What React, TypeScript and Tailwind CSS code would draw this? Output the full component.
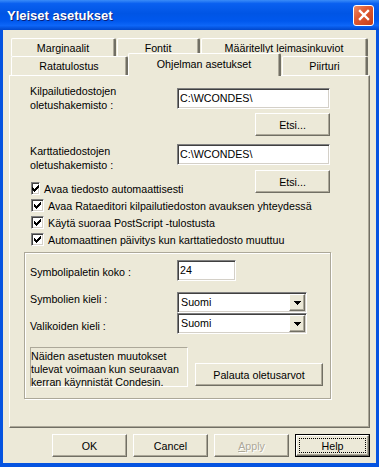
import React from "react";

const raised =
  "bg-[#ECE9D8] border border-t-white border-l-white border-r-[#716F64] border-b-[#716F64] shadow-[inset_-1px_-1px_0_#ACA899]";
const sunken =
  "bg-white border border-t-[#808080] border-l-[#808080] border-r-white border-b-white shadow-[inset_1px_1px_0_#404040,inset_-1px_-1px_0_#D4D0C8]";

const checkPixels = ["......X", ".....XX", "X...XXX", "XX.XXX.", "XXXXX..", ".XXX...", "..X...."];

function Check({ label }: { label: string }) {
  return (
    <div className="flex h-[17px] items-center whitespace-nowrap">
      <div className={`ml-[1px] flex h-[13px] w-[13px] items-center justify-center ${sunken}`}>
        <svg width="7" height="7" shapeRendering="crispEdges">
          {checkPixels.map((row, y) =>
            row.split("").map((c, x) => (c === "X" ? <rect key={`${x}-${y}`} x={x} y={y} width="1" height="1" fill="#000" /> : null))
          )}
        </svg>
      </div>
      <span className="ml-[4px]">{label}</span>
    </div>
  );
}

function Field({ value, w }: { value: string; w: string }) {
  return <div className={`h-[21px] ${w} ${sunken} pl-[2px] pt-[2px] leading-[14px]`}>{value}</div>;
}

function Select({ value }: { value: string }) {
  return (
    <div className={`flex h-[21px] w-[130px] ${sunken} p-[1px]`}>
      <div className="flex-1 pl-[2px] pt-[1px] leading-[14px]">{value}</div>
      <div className={`flex w-[16px] items-center justify-center ${raised}`}>
        <svg width="7" height="4" shapeRendering="crispEdges">
          <rect x="0" y="0" width="7" height="1" fill="#000" />
          <rect x="1" y="1" width="5" height="1" fill="#000" />
          <rect x="2" y="2" width="3" height="1" fill="#000" />
          <rect x="3" y="3" width="1" height="1" fill="#000" />
        </svg>
      </div>
    </div>
  );
}

function Btn({ children, w = "w-[75px]" }: { children: React.ReactNode; w?: string }) {
  return <div className={`flex h-[23px] ${w} items-center justify-center ${raised}`}>{children}</div>;
}

const tab =
  "flex items-center justify-center bg-[#ECE9D8] border-t border-l border-r-2 border-t-white border-l-white border-r-[#716F64] shadow-[inset_-1px_0_0_#ACA899] rounded-t-[2px]";

export default function App() {
  return (
    <div className="flex h-[467px] w-[379px] flex-col bg-[#0553E0] font-['Liberation_Sans',Arial,sans-serif] text-[10.7px] leading-[14px] text-black">
      {/* title bar */}
      <div className="flex h-[30px] items-center justify-between bg-[linear-gradient(180deg,#3a8cf8_0%,#0a60f0_12%,#0055e5_45%,#0058ee_70%,#0d66f8_85%,#0047cc_100%)] pl-[7px] pr-[5px]">
        <span className="pt-[2px] text-[13px] font-bold leading-[16px] text-white [text-shadow:1px_1px_0_#0a1f7a]">
          Yleiset asetukset
        </span>
        <div className="flex h-[21px] w-[21px] items-center justify-center rounded-[3px] border border-white bg-[linear-gradient(135deg,#ec8a66_0%,#e05a32_40%,#c53d17_100%)]">
          <svg width="12" height="12" viewBox="0 0 12 12">
            <path d="M2 2 L10 10 M10 2 L2 10" stroke="#fff" strokeWidth="2.4" strokeLinecap="square" />
          </svg>
        </div>
      </div>

      {/* client area */}
      <div className="mx-[3px] mb-[4px] flex flex-1 flex-col bg-[#ECE9D8] px-[6px] pt-[8px]">
        {/* tabs */}
        <div className="flex h-[18px] gap-[1px] pl-[2px]">
          <div className={`${tab} w-[105px]`}>Marginaalit</div>
          <div className={`${tab} w-[83px]`}>Fontit</div>
          <div className={`${tab} w-[167px]`}>Määritellyt leimasinkuviot</div>
        </div>
        <div className="flex h-[19px] items-start pl-[2px]">
          <div className={`${tab} h-[19px] w-[117px]`}>Ratatulostus</div>
          <div className={`${tab} relative z-10 -mt-[3px] h-[23px] w-[153px] pb-[3px]`}>Ohjelman asetukset</div>
          <div className={`${tab} ml-[1px] h-[19px] w-[86px]`}>Piirturi</div>
        </div>

        {/* panel */}
        <div className={`h-[353px] ${raised} pl-[14px] pt-[8px]`}>
          <div className="pl-[6px]">
            <div className="flex items-start">
              <div className="w-[147px]">
                Kilpailutiedostojen
                <br />
                oletushakemisto :
              </div>
              <div className="flex w-[153px] flex-col items-end">
                <Field value="C:\WCONDES\" w="mt-[4px] w-[153px]" />
                <div className="mt-[4px]">
                  <Btn>Etsi...</Btn>
                </div>
              </div>
            </div>
            <div className="mt-[8px] flex items-start">
              <div className="w-[147px]">
                <div>
                  Karttatiedostojen
                  <br />
                  oletushakemisto :
                </div>
                <div className="mt-[8px]">
                  <Check label="Avaa tiedosto automaattisesti" />
                </div>
              </div>
              <div className="flex w-[153px] flex-col items-end">
                <Field value="C:\WCONDES\" w="w-[153px]" />
                <div className="mt-[5px]">
                  <Btn>Etsi...</Btn>
                </div>
              </div>
            </div>
            <Check label="Avaa Rataeditori kilpailutiedoston avauksen yhteydessä" />
            <Check label="Käytä suoraa PostScript -tulostusta" />
            <Check label="Automaattinen päivitys kun karttatiedosto muuttuu" />
          </div>

          {/* group box */}
          <div className="mt-[4px] h-[147px] w-[307px] border border-[#ACA899] pl-[5px] pt-[7px] shadow-[1px_1px_0_#fff,inset_1px_1px_0_#fff]">
            <div className="flex items-start">
              <div className="mt-[5px] w-[147px]">Symbolipaletin koko :</div>
              <Field value="24" w="w-[59px]" />
            </div>
            <div className="mt-[11px] flex items-start">
              <div className="w-[147px]">Symbolien kieli :</div>
              <Select value="Suomi" />
            </div>
            <div className="flex items-start">
              <div className="mt-[6px] w-[147px]">Valikoiden kieli :</div>
              <Select value="Suomi" />
            </div>
            <div className="mt-[13px] flex items-start">
              <div className="h-[40px] w-[158px] border border-t-[#ACA899] border-l-[#ACA899] border-r-white border-b-white pt-[2px] leading-[13px]">
                Näiden asetusten muutokset
                <br />
                tulevat voimaan kun seuraavan
                <br />
                kerran käynnistät Condesin.
              </div>
              <div className="ml-[7px] mt-[16px]">
                <Btn w="w-[128px]">Palauta oletusarvot</Btn>
              </div>
            </div>
          </div>
        </div>

        {/* dialog buttons */}
        <div className="mt-[6px] flex justify-end gap-[6px]">
          <Btn>OK</Btn>
          <Btn>Cancel</Btn>
          <Btn>
            <span className="text-[#ACA899] [text-shadow:1px_1px_0_#fff]">
              <span className="underline">A</span>pply
            </span>
          </Btn>
          <div className="flex h-[23px] w-[75px] border border-black">
            <div className={`flex flex-1 ${raised}`}>
              <div className="m-[2px] flex flex-1 items-center justify-center border border-dotted border-black">Help</div>
            </div>
          </div>
        </div>
      </div>
    </div>
  );
}
